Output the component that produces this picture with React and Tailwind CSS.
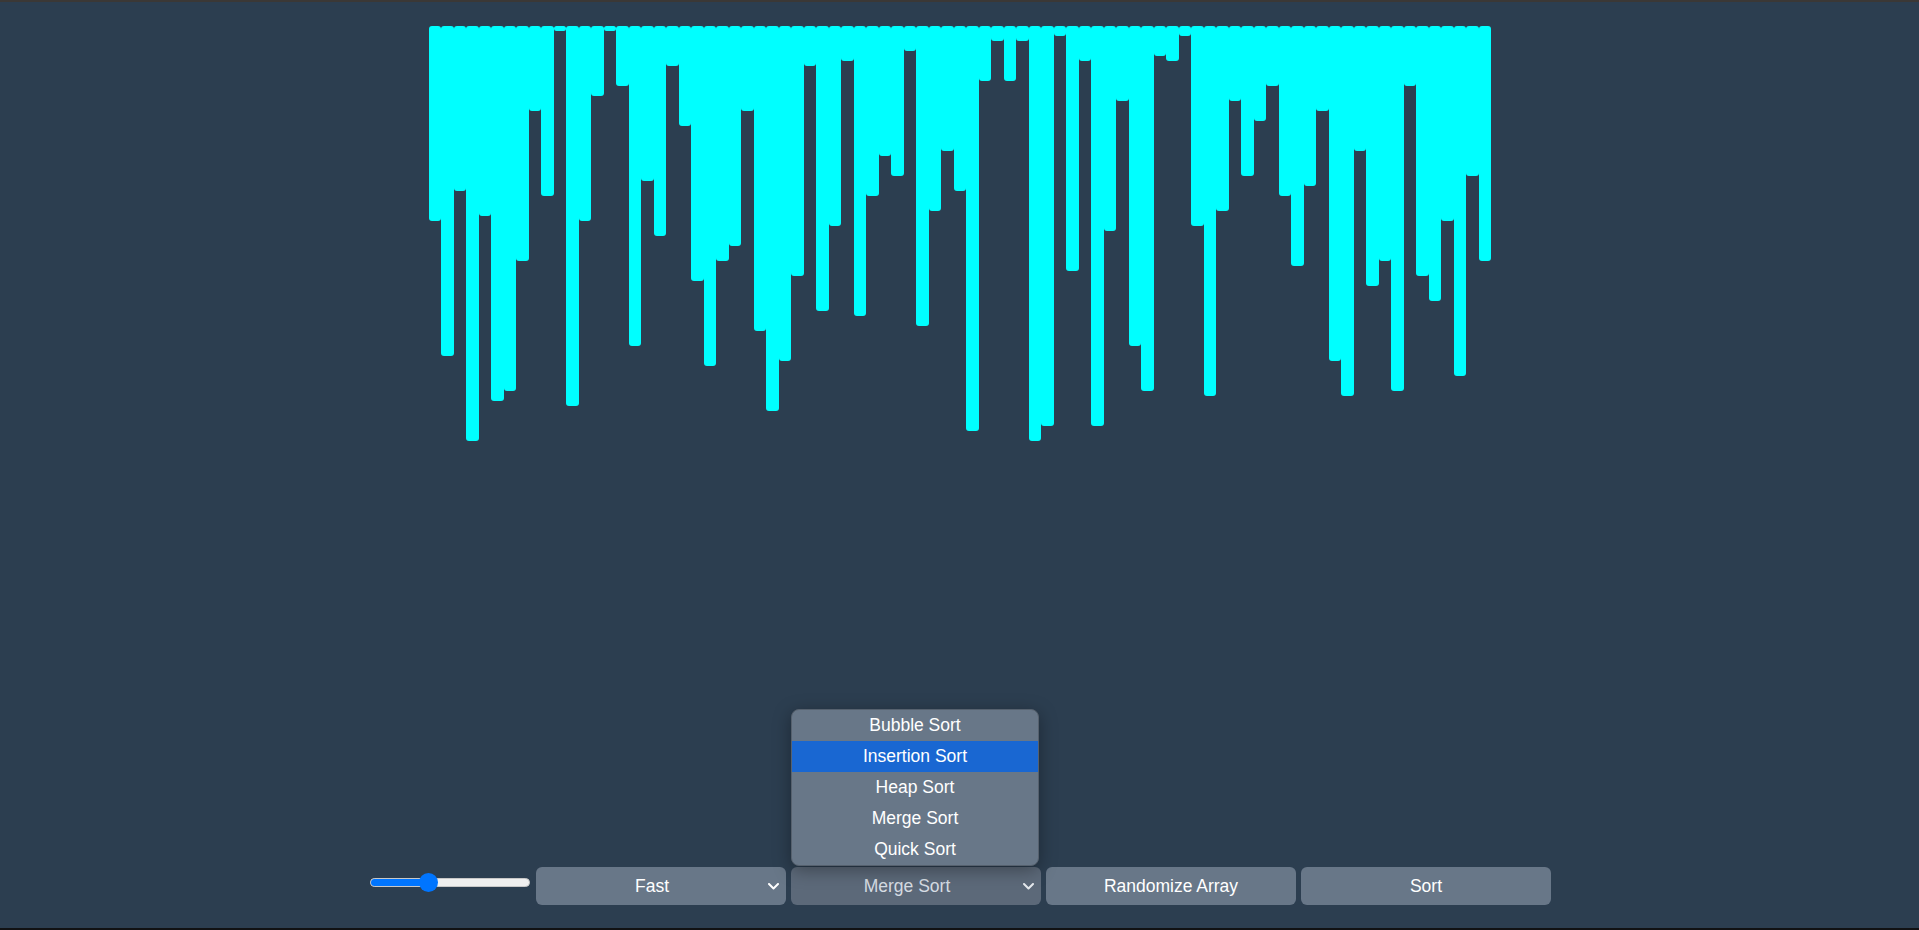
import React from "react";

const VALUES = [
  39, 66, 33, 83, 38, 75, 73, 47, 17, 34, 1, 76, 39, 14, 1, 12, 64, 31, 42, 8,
  20, 51, 68, 47, 44, 17, 61, 77, 67, 50, 8, 57, 40, 7, 58, 34, 26, 30, 5, 60,
  37, 25, 33, 81, 11, 3, 11, 3, 83, 80, 2, 49, 7, 80, 41, 15, 64, 73, 6, 7, 2,
  40, 74, 37, 15, 30, 19, 12, 34, 48, 32, 17, 67, 74, 25, 52, 47, 73, 12, 50,
  55, 39, 70, 30, 47,
];

const OPTIONS = ["Bubble Sort", "Insertion Sort", "Heap Sort", "Merge Sort", "Quick Sort"];

function Chevron({ className = "" }) {
  return (
    <svg width="11" height="7" viewBox="0 0 11 7" className={className} fill="none">
      <polyline points="1,1 5.5,5.5 10,1" stroke="currentColor" strokeWidth="2" strokeLinecap="round" strokeLinejoin="round" />
    </svg>
  );
}

export default function App() {
  return (
    <div
      className="h-[930px] w-full bg-[#2c3e50] border-t-2 border-t-[#3b3836] border-b-2 border-b-[#111214] flex flex-col overflow-hidden"
      style={{ fontFamily: '"Liberation Sans", Arial, sans-serif' }}
    >
      <div className="flex justify-center items-start pt-[24px] pl-[1px]">
        {VALUES.map((v, i) => (
          <div
            key={i}
            className="w-[12.5px] shrink-0 bg-[#00ffff] rounded-[3px]"
            style={{ height: `${v * 5}px` }}
          />
        ))}
      </div>

      <div className="flex-1" />

      <div className="flex items-center justify-center pb-[23px] pl-[2px]">
        <div className="relative w-[160px] h-[20px] mr-[6px] mb-[8px] flex items-center">
          <div className="w-full h-[9px] rounded-full bg-[#efefef] border border-[#c8c8c8] overflow-hidden flex">
            <div className="w-[58px] h-full bg-[#0075ff]" />
          </div>
          <div className="absolute left-[49px] top-[0.5px] w-[19px] h-[19px] rounded-full bg-[#0075ff]" />
        </div>

        <div className="w-[250px] h-[38px] rounded-[6px] bg-[#687788] text-white text-[17.5px] flex items-center">
          <span className="flex-1 text-center">Fast</span>
          <Chevron className="mr-[7px] text-white" />
        </div>

        <div className="relative ml-[5px]">
          <div className="absolute bottom-full mb-[1px] left-0 w-[248px] rounded-[8px] bg-[#687788] border border-[#56616e] shadow-[0_4px_18px_rgba(0,0,0,0.35)] overflow-hidden z-10">
            {OPTIONS.map((o, i) => (
              <div
                key={o}
                className={
                  i === 1
                    ? "h-[31px] flex items-center justify-center text-white text-[17.5px] bg-[#1967d2]"
                    : "h-[31px] flex items-center justify-center text-white text-[17.5px]"
                }
              >
                {o}
              </div>
            ))}
          </div>
          <div className="w-[250px] h-[38px] rounded-[6px] bg-[#5c6979] text-[#d6dce3] text-[17.5px] flex items-center">
            <span className="flex-1 text-center">Merge Sort</span>
            <Chevron className="mr-[7px] text-[#e6eaee]" />
          </div>
        </div>

        <div className="ml-[5px] w-[250px] h-[38px] rounded-[6px] bg-[#687788] text-white text-[17.5px] flex items-center justify-center">
          Randomize Array
        </div>

        <div className="ml-[5px] w-[250px] h-[38px] rounded-[6px] bg-[#687788] text-white text-[17.5px] flex items-center justify-center">
          Sort
        </div>
      </div>
    </div>
  );
}
